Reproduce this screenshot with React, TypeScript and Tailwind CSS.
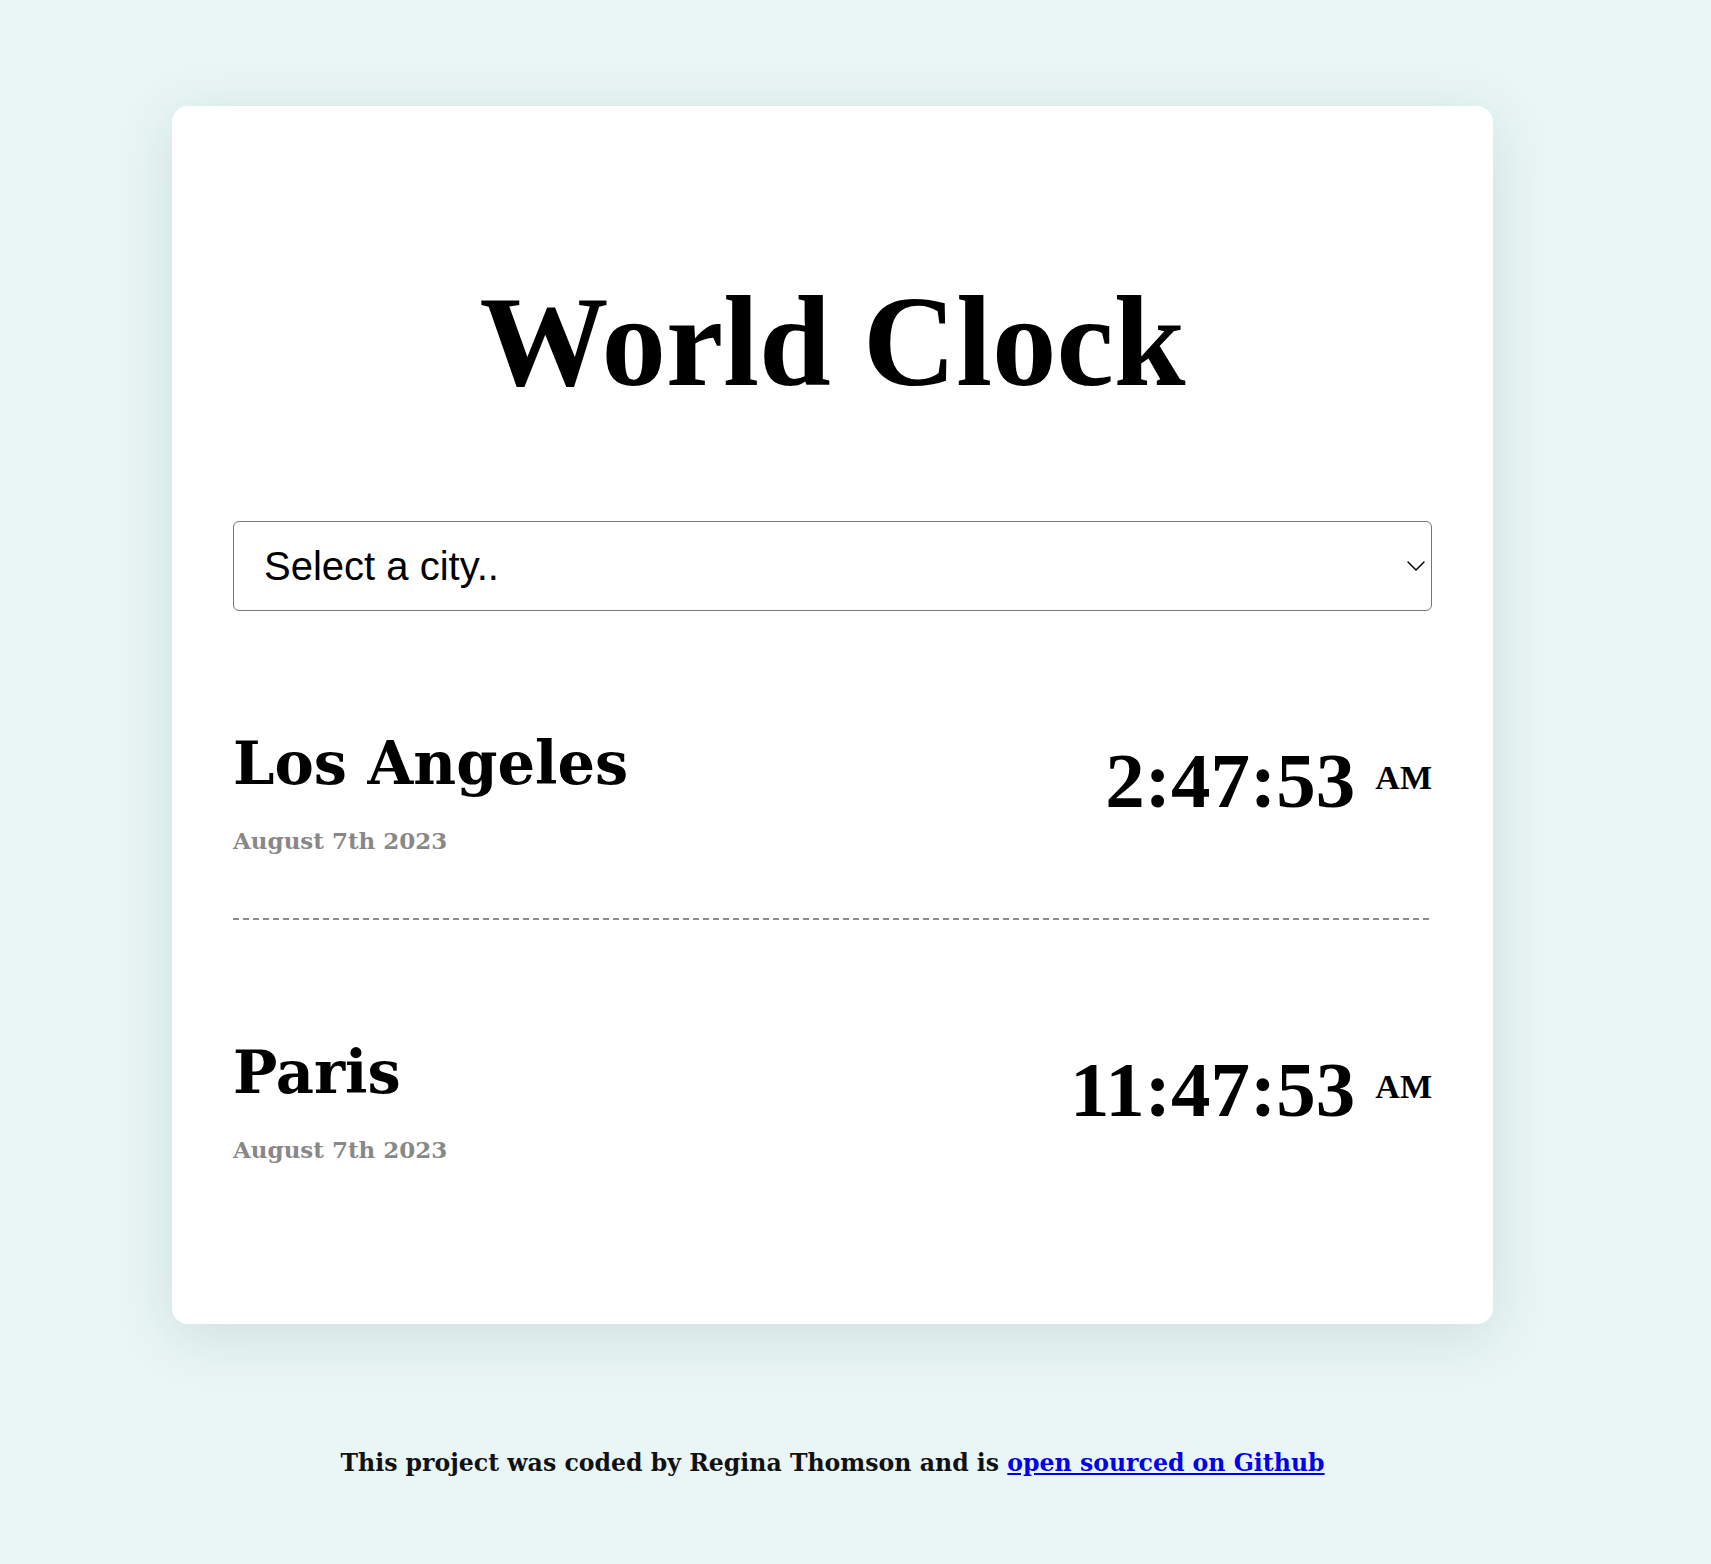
import { ChevronDown } from "lucide-react";

interface City {
  name: string;
  date: string;
  time: string;
  period: string;
}

const cities: City[] = [
  { name: "Los Angeles", date: "August 7th 2023", time: "2:47:53", period: "AM" },
  { name: "Paris", date: "August 7th 2023", time: "11:47:53", period: "AM" },
];

const serif = "font-['DejaVu_Serif',serif]";
const display = "font-['Liberation_Serif',serif]";

function CityRow(props: { city: City }) {
  return (
    <div className="flex justify-between items-start pt-[123px] pb-[66px]">
      <div className={serif}>
        <h2 className="text-[59px] leading-[1] font-bold text-black">{props.city.name}</h2>
        <div className="mt-[36px] text-[23px] leading-[1] font-bold text-[#888888]">
          {props.city.date}
        </div>
      </div>
      <div className={`flex items-start mt-[7px] ${display}`}>
        <span className="text-[79px] leading-[1] font-bold text-black">{props.city.time}</span>
        <span className="ml-[20px] mt-[20px] text-[34px] leading-[1] font-bold text-black">
          {props.city.period}
        </span>
      </div>
    </div>
  );
}

export default function App() {
  return (
    <div className="min-h-[1564px] bg-[#eaf6f6]">
      <div className="flex flex-col items-center pr-[46px]">
        <div className="mt-[106px] w-[1321px] bg-white rounded-[16px] px-[61px] pt-[171px] pb-[97px] shadow-[0_12px_60px_rgba(30,60,60,0.13)]">
          <h1 className={`${display} text-center text-[129px] leading-[1] font-bold text-black`}>
            World Clock
          </h1>
          <div className="relative mt-[115px]">
            <select className="block w-full h-[90px] appearance-none rounded-[6px] border border-[#767676] bg-white pl-[30px] pr-[50px] font-['Liberation_Sans',Arial,sans-serif] text-[40px] text-black">
              <option>Select a city..</option>
              <option>Los Angeles</option>
              <option>Paris</option>
              <option>Tokyo</option>
              <option>Sydney</option>
            </select>
            <ChevronDown
              className="absolute right-0 top-1/2 -translate-y-1/2 w-[32px] h-[32px] text-black pointer-events-none"
              strokeWidth={1.1}
            />
          </div>
          {cities.map((city, index) => (
            <div key={index}>
              {index > 0 && (
                <div className="h-[2px] bg-[repeating-linear-gradient(to_right,#8c8c8c_0px,#8c8c8c_6px,transparent_6px,transparent_10px)]" />
              )}
              <CityRow city={city} />
            </div>
          ))}
        </div>
        <p className={`${serif} mt-[122px] text-[23.6px] font-bold text-[#111111]`}>
          This project was coded by Regina Thomson and is{" "}
          <a href="#" className="text-[#0000ee] underline">
            open sourced on Github
          </a>
        </p>
      </div>
    </div>
  );
}
